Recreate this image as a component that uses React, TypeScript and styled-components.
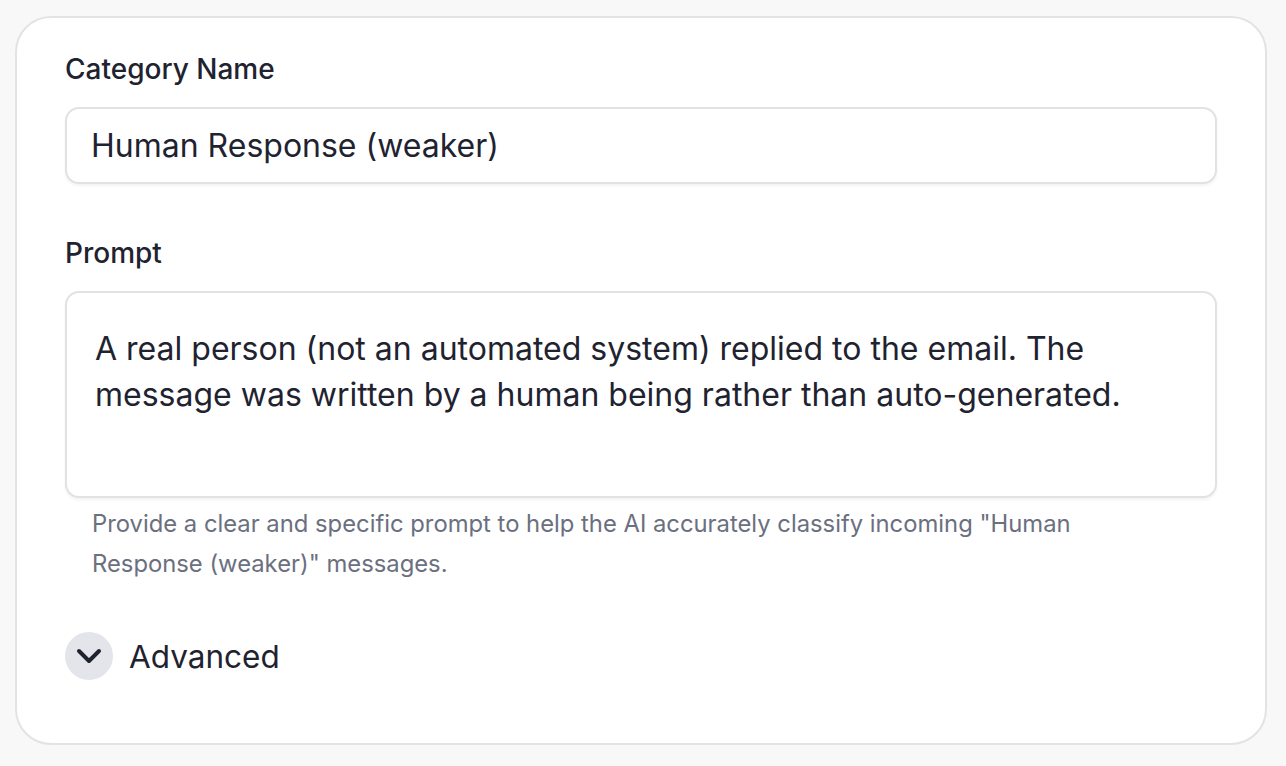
import { createGlobalStyle } from 'styled-components';
import styled from 'styled-components';

const GlobalStyle = createGlobalStyle`
  html, body {
    margin: 0;
    padding: 0;
    background: #f8f8f8;
  }

  body {
    font-family: Inter, 'Noto Sans', sans-serif;
    color: #1f2330;
  }
`;

const categoryName = 'Human Response (weaker)';

export default function App() {
  return (
    <>
      <GlobalStyle />
      <Page>
        <Card>
          <Field>
            <Label>Category Name</Label>
            <TextInput defaultValue={categoryName} />
          </Field>
          <Field>
            <Label>Prompt</Label>
            <PromptArea
              defaultValue={
                'A real person (not an automated system) replied to the email. The message was written by a human being rather than auto-generated.'
              }
            />
            <HelpText>
              Provide a clear and specific prompt to help the AI accurately
              classify incoming "{categoryName}" messages.
            </HelpText>
          </Field>
          <AdvancedToggle type="button">
            <ToggleIcon>
              <svg width="26" height="16" viewBox="0 0 26 16" fill="none">
                <path
                  d="M3 3l10 10 10-10"
                  stroke="currentColor"
                  strokeWidth="4"
                  strokeLinecap="round"
                  strokeLinejoin="round"
                />
              </svg>
            </ToggleIcon>
            Advanced
          </AdvancedToggle>
        </Card>
      </Page>
    </>
  );
}

const Page = styled.div`
  padding: 16px 19px 21px 15px;
`;

const Card = styled.div`
  box-sizing: border-box;
  height: 729px;
  display: flex;
  flex-direction: column;
  padding: 34px 48px 0 48px;
  background: #ffffff;
  border: 2px solid #e3e3e3;
  border-radius: 36px;
`;

const Field = styled.div`
  display: flex;
  flex-direction: column;
  gap: 21px;
  margin-bottom: 52px;
`;

const Label = styled.label`
  font-size: 28px;
  font-weight: 500;
  line-height: 34px;
  color: #1f2330;
`;

const inputBase = `
  box-sizing: border-box;
  width: 100%;
  border: 2px solid #e2e2e2;
  border-radius: 14px;
  background: #ffffff;
  box-shadow: 0 2px 3px rgba(0, 0, 0, 0.05);
  font-family: Inter, 'Noto Sans', sans-serif;
  color: #1f2330;
  outline: none;
`;

const TextInput = styled.input`
  ${inputBase}
  height: 77px;
  padding: 0 24px;
  font-size: 32px;
`;

const PromptArea = styled.textarea`
  ${inputBase}
  height: 207px;
  padding: 33px 28px 27px;
  font-size: 32px;
  line-height: 46px;
  resize: none;
`;

const HelpText = styled.p`
  margin: -15px 60px 0 27px;
  font-size: 23.8px;
  line-height: 39.5px;
  color: #6b7080;
`;

const AdvancedToggle = styled.button`
  display: flex;
  align-items: center;
  gap: 16px;
  margin-top: -3px;
  padding: 0;
  border: none;
  background: none;
  font-family: Inter, 'Noto Sans', sans-serif;
  font-size: 31.5px;
  color: #1f2330;
  cursor: pointer;
`;

const ToggleIcon = styled.span`
  width: 48px;
  height: 48px;
  border-radius: 50%;
  background: #e4e5ea;
  display: flex;
  align-items: center;
  justify-content: center;
  color: #1f2330;
`;
